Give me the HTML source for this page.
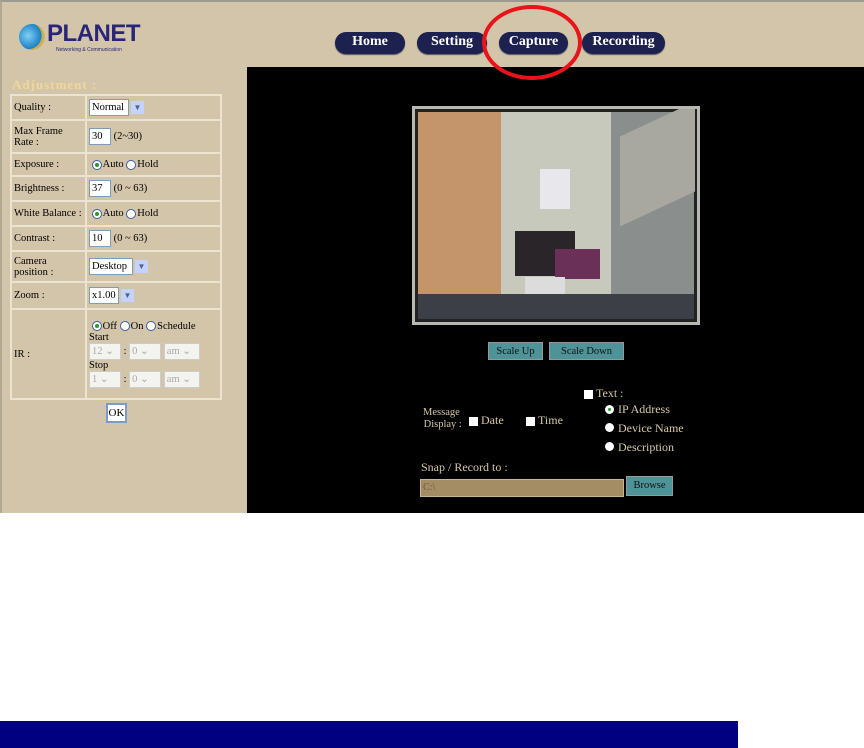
<!DOCTYPE html>
<html><head><meta charset="utf-8"><style>
*{margin:0;padding:0;box-sizing:border-box}
body{width:864px;height:748px;background:#fff;position:relative;overflow:hidden;font-family:"Liberation Serif",serif;font-size:11px;color:#000}
.a{position:absolute}
#top{left:0;top:0;width:864px;height:513px;background:#d3c5a9;border-top:2px solid #9c9a8e;border-left:2px solid #b0a890}
#blk{left:247px;top:67px;width:617px;height:446px;background:#000}
.nav{position:absolute;top:32px;height:22px;background:#1c2150;border-radius:11px;color:#fff;font-weight:bold;font-size:14px;text-align:center;line-height:20px;box-shadow:0 1px 1px #555}
table{position:absolute;left:10px;top:94px;width:212px;border-collapse:collapse}
td{border:2px solid #ece4d2;vertical-align:middle;font-size:10.5px;padding:1px 2px;line-height:11px}
td.l{width:75px}
.in{display:inline-block;background:#fff;border:1px solid #7f9db9;height:17px;vertical-align:middle;padding:0 2px;line-height:15px}
.dd{display:inline-block;width:13px;height:13px;background:#c3d3fd;vertical-align:middle;margin-left:2px;color:#4d6185;font-size:8px;text-align:center;line-height:13px}
.r{display:inline-block;width:10px;height:10px;border-radius:50%;border:1px solid #3d5ca6;background:#fff;vertical-align:middle;position:relative;margin-right:1px}
.r.on::after{content:"";position:absolute;left:2px;top:2px;width:4px;height:4px;border-radius:50%;background:#2a9a2a}
.dis{display:inline-block;background:#f3f3ef;border:1px solid #ccc;height:17px;vertical-align:middle;color:#aaa;padding:0 2px;line-height:15px}
.btn{position:absolute;background:#4e9397;border:1px solid #999;color:#111;font-size:10.5px;text-align:center;line-height:17px}
.t{position:absolute;color:#d6c8a6;font-size:12px}
.cb{display:inline-block;width:9px;height:9px;background:#fff;vertical-align:middle;margin-right:3px}
.rd{position:absolute;width:9px;height:9px;border-radius:50%;background:#fff}
</style></head><body>
<div id="top" class="a"></div>
<div id="blk" class="a"></div>
<div class="a" style="left:19px;top:24px;width:26px;height:26px;border-radius:50%;background:radial-gradient(circle at 35% 45%,#7fd0f4,#1a7fc4 60%,#c7a54c 61%,#e8d18a)"></div>
<div class="a" style="left:47px;top:20px;font-family:'Liberation Sans',sans-serif;font-weight:bold;font-size:24px;color:#2a257a;letter-spacing:-0.5px">PLANET</div>
<div class="a" style="left:56px;top:47px;font-family:'Liberation Sans',sans-serif;font-size:5px;color:#2a257a">Networking &amp; Communication</div>
<div class="nav" style="left:335px;width:70px">Home</div>
<div class="nav" style="left:417px;width:70px">Setting</div>
<div class="nav" style="left:499px;width:69px">Capture</div>
<div class="nav" style="left:582px;width:83px">Recording</div>
<div class="a" style="left:482px;top:5px;width:100px;height:75px;border:4px solid #e8141a;border-radius:50%"></div>
<div class="a" style="left:12px;top:77px;color:#f0d89a;font-weight:bold;font-size:13px;letter-spacing:1px">Adjustment :</div>
<table>
<tr style="height:25px"><td class="l">Quality :</td><td><span class="in" style="width:40px">Normal</span><span class="dd">▼</span></td></tr>
<tr style="height:33px"><td class="l">Max Frame<br>Rate :</td><td><span class="in" style="width:22px">30</span> (2~30)</td></tr>
<tr style="height:23px"><td class="l">Exposure :</td><td>&nbsp;<span class="r on"></span>Auto <span class="r"></span>Hold</td></tr>
<tr style="height:25px"><td class="l">Brightness :</td><td><span class="in" style="width:22px">37</span> (0 ~ 63)</td></tr>
<tr style="height:25px"><td class="l">White Balance :</td><td>&nbsp;<span class="r on"></span>Auto <span class="r"></span>Hold</td></tr>
<tr style="height:25px"><td class="l">Contrast :</td><td><span class="in" style="width:22px">10</span> (0 ~ 63)</td></tr>
<tr style="height:31px"><td class="l">Camera<br>position :</td><td><span class="in" style="width:44px">Desktop</span><span class="dd">▼</span></td></tr>
<tr style="height:27px"><td class="l">Zoom :</td><td><span class="in" style="width:30px">x1.00</span><span class="dd">▼</span></td></tr>
<tr style="height:90px"><td class="l">IR :</td><td>&nbsp;<span class="r on"></span>Off <span class="r"></span>On <span class="r"></span>Schedule<br>Start<br><span class="dis" style="width:32px">12 ⌄</span> : <span class="dis" style="width:32px">0 ⌄</span> <span class="dis" style="width:36px">am ⌄</span><br>Stop<br><span class="dis" style="width:32px">1 ⌄</span> : <span class="dis" style="width:32px">0 ⌄</span> <span class="dis" style="width:36px">am ⌄</span></td></tr>
</table>
<div class="a" style="left:106px;top:403px;width:21px;height:20px;border:2px solid #7a9cc8;background:#fff;text-align:center;line-height:16px;font-size:11px">OK</div>
<div class="a" style="left:412px;top:106px;width:288px;height:219px;border:3px solid #b8b8b0;background:#222;overflow:hidden">
 <div class="a" style="left:3px;top:3px;width:276px;height:207px;background:linear-gradient(90deg,#c4946a 0 30%,#c6c9bc 30% 70%,#8a8e8c 70%)"></div>
 <div class="a" style="left:125px;top:60px;width:30px;height:40px;background:#e8e8ec"></div>
 <div class="a" style="left:100px;top:122px;width:60px;height:45px;background:#2a2528"></div>
 <div class="a" style="left:140px;top:140px;width:45px;height:30px;background:#6b3058"></div>
 <div class="a" style="left:110px;top:168px;width:40px;height:40px;background:#dcdcdc"></div>
 <div class="a" style="left:205px;top:10px;width:75px;height:90px;background:#a8a8a0;transform:skewY(-25deg)"></div>
 <div class="a" style="left:3px;top:185px;width:276px;height:25px;background:#3c4046"></div>
</div>
<div class="btn" style="left:488px;top:342px;width:55px;height:18px">Scale Up</div>
<div class="btn" style="left:549px;top:342px;width:75px;height:18px">Scale Down</div>
<div class="t" style="left:584px;top:386px"><span class="cb"></span>Text :</div>
<div class="t" style="left:421px;top:407px;font-size:10.5px;line-height:12px;text-align:center">Message<br>&nbsp;Display :</div>
<div class="t" style="left:469px;top:413px"><span class="cb"></span>Date</div>
<div class="t" style="left:526px;top:413px"><span class="cb"></span>Time</div>
<div class="rd" style="left:605px;top:405px"></div><div class="a" style="left:608px;top:408px;width:3px;height:3px;background:#2a9a2a;border-radius:50%"></div>
<div class="t" style="left:618px;top:402px">IP Address</div>
<div class="rd" style="left:605px;top:423px"></div><div class="t" style="left:618px;top:421px">Device Name</div>
<div class="rd" style="left:605px;top:442px"></div><div class="t" style="left:618px;top:440px">Description</div>
<div class="t" style="left:421px;top:460px">Snap / Record to :</div>
<div class="a" style="left:420px;top:479px;width:204px;height:18px;background:#a48c64;border:1px solid #c8b890;color:#6a5a40;font-size:10px;padding-left:2px;line-height:16px">C:\</div>
<div class="btn" style="left:626px;top:476px;width:47px;height:20px;line-height:18px">Browse</div>
<div class="a" style="left:0;top:721px;width:738px;height:27px;background:#000080"></div>
</body></html>
